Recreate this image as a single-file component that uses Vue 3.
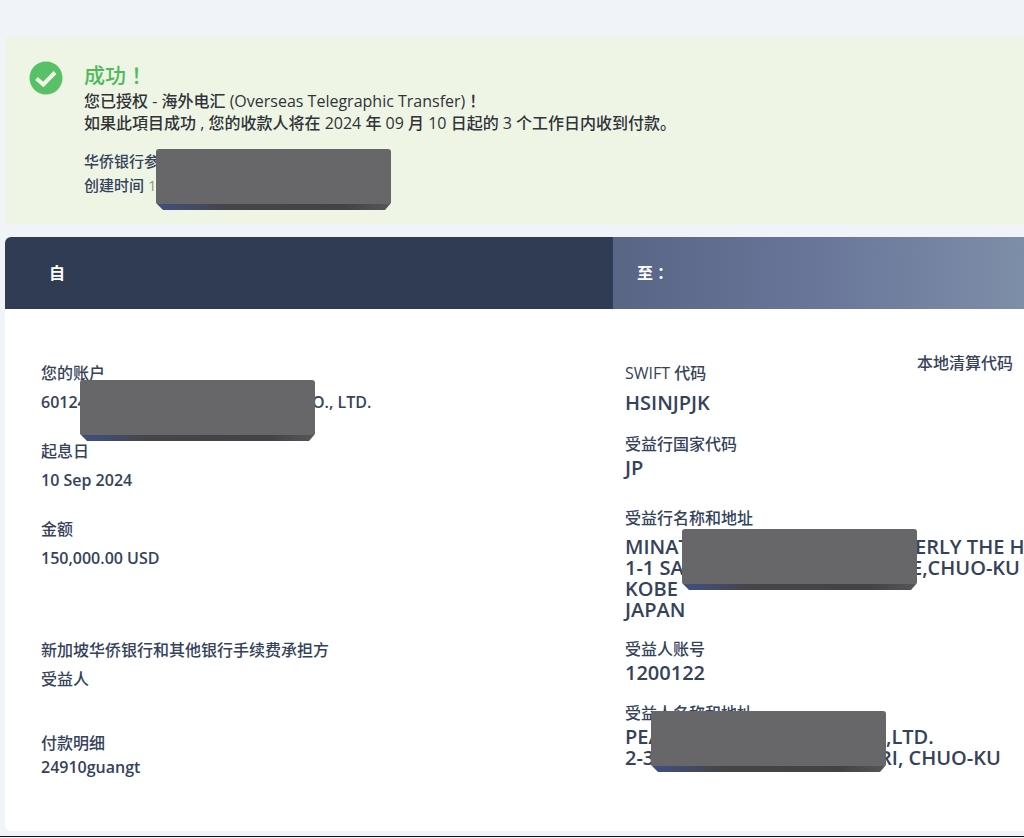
<script setup>
const fromFields = [
  { id: 'account', label: '您的账户', lines: [{ head: '60124', tail: 'O., LTD.' }], cover: true },
  { id: 'value-date', label: '起息日', lines: [{ head: '10 Sep 2024' }] },
  { id: 'amount', label: '金额', lines: [{ head: '150,000.00 USD' }] },
  { id: 'charges', label: '新加坡华侨银行和其他银行手续费承担方', lines: [{ head: '受益人' }] },
  { id: 'details', label: '付款明细', lines: [{ head: '24910guangt' }] },
]

const toFields = [
  { id: 'swift', label: 'SWIFT 代码', lines: [{ head: 'HSINJPJK' }] },
  { id: 'country', label: '受益行国家代码', lines: [{ head: 'JP' }] },
  {
    id: 'bank',
    label: '受益行名称和地址',
    lines: [
      { head: 'MINAT', tail: 'ERLY THE H' },
      { head: '1-1 SA', tail: 'E,CHUO-KU' },
      { head: 'KOBE' },
      { head: 'JAPAN' },
    ],
    cover: true,
  },
  { id: 'payee-account', label: '受益人账号', lines: [{ head: '1200122' }] },
  {
    id: 'payee',
    label: '受益人名称和地址',
    lines: [
      { head: 'PEA', tail: ',LTD.' },
      { head: '2-3', tail: 'RI, CHUO-KU' },
    ],
    cover: true,
  },
]
</script>

<template>
  <main class="page">
    <section class="banner">
      <svg class="tick" viewBox="0 0 34 34" aria-hidden="true">
        <circle cx="17" cy="17" r="16.5" fill="#58c066" />
        <path d="M7.5 17.5 L14.3 23.5 L26 11.5" fill="none" stroke="#f1f8e8" stroke-width="4" />
      </svg>
      <div class="message">
        <h1>成功<span class="mark">！</span></h1>
        <p>您已授权 - 海外电汇 <span class="latin">(Overseas Telegraphic Transfer)</span><span class="mark">！</span></p>
        <p>如果此項目成功 , 您的收款人将在 <span class="latin">2024</span> 年 <span class="latin">09</span> 月 <span class="latin">10</span> 日起的 <span class="latin">3</span> 个工作日内收到付款。</p>
        <div class="meta">
          <p>华侨银行参</p>
          <p>创建时间 <span class="faint">10</span></p>
          <span class="cover"></span>
        </div>
      </div>
    </section>

    <section class="card">
      <header class="split">
        <h2 class="from-head">自</h2>
        <h2 class="to-head">至<span class="mark">：</span></h2>
      </header>
      <div class="split body">
        <dl class="from">
          <div v-for="f in fromFields" :key="f.id" class="field" :class="f.id">
            <dt>{{ f.label }}</dt>
            <dd>
              <div v-for="l in f.lines" :key="l.head" class="line">
                <span class="head">{{ l.head }}</span><span v-if="l.tail">{{ l.tail }}</span>
              </div>
              <span v-if="f.cover" class="cover"></span>
            </dd>
          </div>
        </dl>
        <div class="to">
          <dl>
            <div v-for="f in toFields" :key="f.id" class="field" :class="f.id">
              <dt>{{ f.label }}</dt>
              <dd>
                <div v-for="l in f.lines" :key="l.head" class="line">
                  <span class="head">{{ l.head }}</span><span v-if="l.tail">{{ l.tail }}</span>
                </div>
                <span v-if="f.cover" class="cover"></span>
              </dd>
            </div>
          </dl>
          <p class="clearing">本地清算代码</p>
        </div>
      </div>
    </section>
  </main>
</template>

<style>
body {
  background: #f0f4f9;
}
</style>

<style scoped>
* {
  box-sizing: border-box;
  margin: 0;
  padding: 0;
}
.page {
  padding: 37px 0 5px 5px;
  border-bottom: 1px solid #111;
  overflow: hidden;
  font-family: "Open Sans", "Noto Sans CJK SC", sans-serif;
  font-size: 16px;
  line-height: 24px;
  color: #35425a;
}
.banner {
  display: flex;
  gap: 21px;
  padding: 24px 24px 27px;
  background: #eef5e5;
  color: #303338;
}
.tick {
  flex: none;
  width: 34px;
  height: 34px;
}
h1 {
  font-size: 21px;
  font-weight: 500;
  line-height: 29px;
  color: #4fbb58;
}
.mark {
  font-family: "Noto Sans CJK TC", sans-serif;
  line-height: 0;
}
.message {
  font-weight: 500;
}
.message p {
  line-height: 22px;
}
.latin {
  font-weight: 400;
}
.message .meta {
  position: relative;
  margin-top: 15px;
  font-size: 15px;
  color: #35425a;
}
.message .meta p {
  line-height: 24px;
}
.faint {
  font-weight: 400;
  color: #8f9880;
}
.cover {
  position: absolute;
  width: 235px;
  height: 61px;
  border-radius: 3px;
  background:
    linear-gradient(90deg, #3f4f85, #454547 30%, #434345 80%, #565658) bottom / 100% 6px no-repeat,
    #676769;
  clip-path: polygon(0 0, 100% 0, 100% 54px, 229px 100%, 7px 100%, 0 54px);
}
.meta .cover {
  top: 0;
  left: 72px;
}
.card {
  margin-top: 13px;
  border-radius: 6px 0 0 6px;
  background: #fff;
  overflow: hidden;
}
.split {
  display: grid;
  grid-template-columns: minmax(0, 608fr) minmax(0, 411fr);
}
h2 {
  padding: 24px;
  font-size: 16px;
  font-weight: 700;
  line-height: 24px;
  color: #fff;
}
.from-head {
  padding-left: 44px;
  background: #303b54;
}
.to-head {
  background: linear-gradient(90deg, #586585, #69769a 50%, #7d8ea8);
}
.body {
  padding: 52px 0;
}
.from {
  padding-left: 36px;
}
.to {
  display: grid;
  grid-template-columns: 292px 1fr;
  padding-left: 12px;
}
.to dl {
  white-space: nowrap;
}
dt {
  font-weight: 500;
}
dd {
  position: relative;
  font-weight: 600;
}
.line {
  display: flex;
  white-space: pre;
}
.head {
  flex: none;
}
.from .field {
  margin-bottom: 25px;
}
.from dd {
  padding-top: 5px;
}
.from .amount {
  margin-bottom: 68px;
}
.from .charges {
  margin-bottom: 40px;
}
.charges dd {
  font-weight: 500;
}
.from .details {
  margin-bottom: 0;
}
.from .details dd {
  padding-top: 0;
}
.account .head {
  width: 271px;
}
.account .cover {
  top: -5px;
  left: 39px;
}
.to dd {
  font-size: 20px;
}
.to .field {
  margin-bottom: 16px;
}
.to .swift {
  margin-bottom: 17px;
}
.to .swift dd {
  padding-top: 6px;
}
.to .country {
  margin-bottom: 26px;
}
.to .bank {
  margin-bottom: 17px;
}
.to .bank dd {
  padding-top: 6px;
}
.to .payee {
  margin-bottom: 0;
}
.to .payee dd {
  padding-top: 1px;
}
.bank .line,
.payee .line {
  line-height: 21px;
}
.bank .head {
  width: 290px;
}
.bank .line:nth-child(2) .head {
  width: 286px;
}
.bank .cover {
  top: -1px;
  left: 57px;
}
.payee .head {
  width: 261px;
}
.payee .line:nth-child(2) .head {
  width: 254px;
}
.payee .cover {
  top: -14px;
  left: 26px;
}
.clearing {
  margin-top: -10px;
  font-weight: 500;
  white-space: nowrap;
}
</style>
